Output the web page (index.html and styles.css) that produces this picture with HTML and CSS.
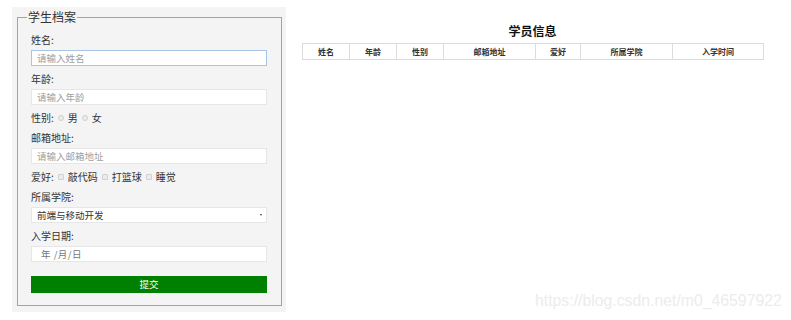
FILE: index.html
```html
<!DOCTYPE html>
<html lang="zh-CN">
<head>
<meta charset="utf-8">
<title>学生档案</title>
<link rel="stylesheet" href="styles.css">
</head>
<body>
<div class="page">
  <div class="panel">
    <fieldset class="form">
      <legend class="legend">学生档案</legend>
      <div class="label">姓名:</div>
      <input class="field focus" type="text" placeholder="请输入姓名">
      <div class="label">年龄:</div>
      <input class="field" type="text" placeholder="请输入年龄">
      <div class="row"><span>性别:</span><input class="radio" type="radio" name="sex"><span>男</span><input class="radio" type="radio" name="sex"><span>女</span></div>
      <div class="label">邮箱地址:</div>
      <input class="field" type="text" placeholder="请输入邮箱地址">
      <div class="row"><span>爱好:</span><input class="check" type="checkbox"><span>敲代码</span><input class="check" type="checkbox"><span>打篮球</span><input class="check" type="checkbox"><span>睡觉</span></div>
      <div class="label">所属学院:</div>
      <div class="select-wrap"><select class="field select"><option>前端与移动开发</option></select></div>
      <div class="label">入学日期:</div>
      <div class="field date">年 /月/日</div>
      <button class="submit" type="button">提交</button>
    </fieldset>
  </div>
  <div class="info">
    <h3 class="title">学员信息</h3>
    <table class="table">
      <thead>
        <tr>
          <th class="c1">姓名</th>
          <th class="c1">年龄</th>
          <th class="c1">性别</th>
          <th class="c2">邮箱地址</th>
          <th class="c3">爱好</th>
          <th class="c2">所属学院</th>
          <th class="c4">入学时间</th>
        </tr>
      </thead>
    </table>
  </div>
</div>
<div class="watermark">https://blog.csdn.net/m0_46597922</div>
</body>
</html>
```
FILE: styles.css
```css
* { box-sizing: border-box; }
html, body { margin: 0; padding: 0; background: #fff; }
body {
  font-family: "Noto Sans CJK SC", "Microsoft YaHei", sans-serif;
  color: #333;
  width: 791px;
  height: 320px;
  overflow: hidden;
  position: relative;
}
.page {
  display: flex;
  align-items: flex-start;
}
.panel {
  margin: 7px 0 0 12px;
  width: 274px;
  background: #f4f4f4;
  padding: 2px 4px 6px 5px;
}
.form {
  margin: 0;
  border: 1px solid #a3a3a3;
  padding: 8px 13px 12px 13px;
  min-width: 0;
}
.legend {
  font-size: 12px;
  line-height: 16px;
  color: #333;
  padding: 0 1px;
  margin-left: -4px;
}
.label, .row {
  font-size: 10px;
  line-height: 14px;
  height: 14px;
  margin-bottom: 3px;
  color: #333;
}
.row {
  display: flex;
  align-items: center;
  margin-bottom: 6px;
}
.field {
  display: block;
  width: 236px;
  height: 16px;
  margin: 0 0 6px 0;
  padding: 0 0 0 5px;
  border: 1px solid #e6e6e6;
  background: #fff;
  font-family: "Noto Sans CJK SC", sans-serif;
  font-size: 9.5px;
  color: #333;
  outline: none;
}
.field::placeholder { color: #a0a0a0; }
.field.focus { border-color: #a8c4e6; }
.radio, .check {
  -webkit-appearance: none;
  appearance: none;
  width: 6px;
  height: 6px;
  margin: 0 4px 0 4px;
  border: 1px solid #d0d0d0;
  background: #ececec;
}
.radio { border-radius: 50%; }
.check { border-radius: 1px; }
.select-wrap {
  position: relative;
  width: 236px;
}
.select-wrap::after {
  content: "";
  position: absolute;
  right: 5px;
  top: 7px;
  border-left: 1.5px solid transparent;
  border-right: 1.5px solid transparent;
  border-top: 2px solid #444;
}
.select {
  -webkit-appearance: none;
  appearance: none;
  padding-left: 5px;
  color: #333;
  line-height: 14px;
}
.date {
  color: #777;
  line-height: 14px;
  padding-left: 9px;
  letter-spacing: 0.5px;
}
.submit {
  display: block;
  width: 236px;
  height: 17px;
  margin-top: 14px;
  padding: 0;
  border: 0;
  background: #008000;
  color: #fff;
  font-family: "Noto Sans CJK SC", sans-serif;
  font-size: 9.5px;
  line-height: 17px;
}
.info {
  margin-left: 16px;
  width: 461px;
  padding-top: 24px;
}
.title {
  margin: 0 0 5px 0;
  text-align: center;
  font-size: 12px;
  line-height: 14px;
  font-weight: bold;
  color: #111;
}
.table {
  width: 461px;
  border-collapse: collapse;
  table-layout: fixed;
}
.table th {
  border: 1px solid #dcdcdc;
  height: 16px;
  padding: 0;
  font-size: 8px;
  line-height: 14px;
  font-weight: bold;
  color: #333;
  text-align: center;
}
.c1 { width: 47px; }
.c2 { width: 92px; }
.c3 { width: 45px; }
.c4 { width: 91px; }
.watermark {
  position: absolute;
  left: 535px;
  top: 292px;
  font-family: "Liberation Sans", Arial, sans-serif;
  font-size: 15.8px;
  line-height: 18px;
  color: #ececec;
  white-space: nowrap;
}
```
